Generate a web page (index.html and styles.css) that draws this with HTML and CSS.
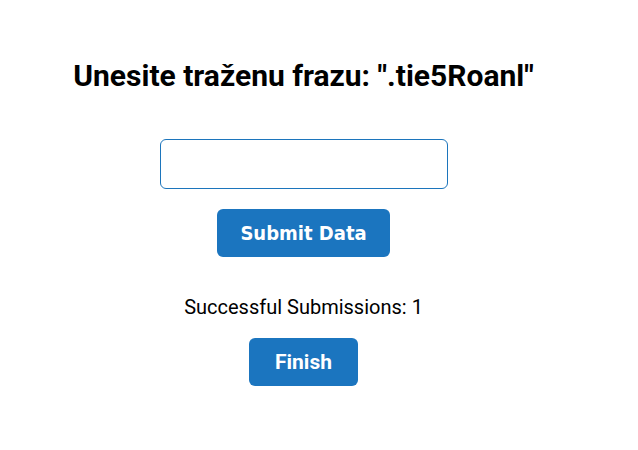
FILE: index.html
```html
<!DOCTYPE html>
<html>
<head>
<meta charset="utf-8">
<link rel="stylesheet" href="styles.css">
</head>
<body>
<div class="app">
  <h1 class="title">Unesite traženu frazu: ".tie5Roanl"</h1>
  <input class="field" type="text">
  <button class="btn btn-submit">Submit Data</button>
  <p class="count">Successful Submissions: 1</p>
  <button class="btn btn-finish">Finish</button>
</div>
</body>
</html>
```

FILE: styles.css
```css
html, body {
  margin: 0;
  padding: 0;
  background: #fff;
}
body {
  padding: 0 8px;
  font-family: Roboto, "Liberation Sans", sans-serif;
}
.app {
  width: 591px;
  display: flex;
  flex-direction: column;
  align-items: center;
  padding-top: 58px;
}
.title {
  margin: 0;
  font-size: 30px;
  font-weight: 700;
  color: #000;
  line-height: 35px;
}
.field {
  margin-top: 46px;
  width: 288px;
  height: 50px;
  box-sizing: border-box;
  border: 1px solid #1c75bc;
  border-radius: 6px;
  outline: none;
  background: #fff;
}
.btn {
  border: none;
  border-radius: 6px;
  background: #1b75bf;
  color: #fff;
  height: 48px;
  font-weight: 700;
  cursor: pointer;
}
.btn-submit {
  margin-top: 20px;
  width: 173px;
  font-family: "DejaVu Sans Condensed", "DejaVu Sans", sans-serif;
  font-size: 20px;
}
.count {
  margin: 38px 0 0;
  font-size: 20px;
  line-height: 24px;
  color: #000;
}
.btn-finish {
  margin-top: 19px;
  width: 109px;
  font-family: Roboto, sans-serif;
  font-size: 21px;
}
```
